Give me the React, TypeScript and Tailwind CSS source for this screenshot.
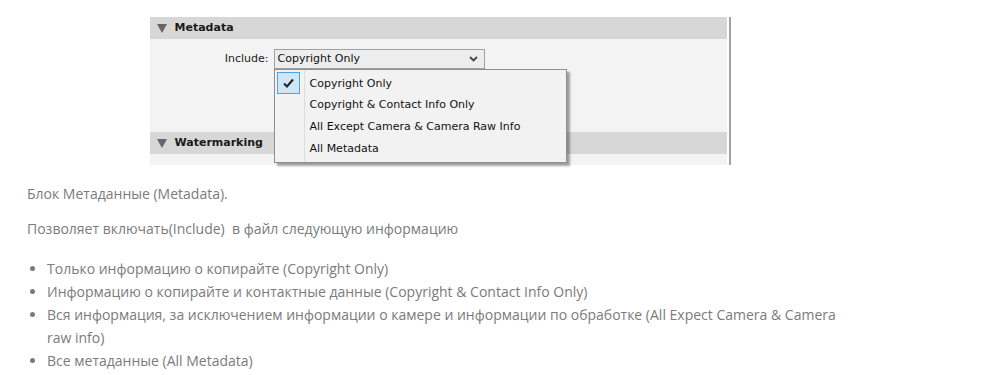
import { Fragment } from 'react';

const menuItems = [
  'Copyright Only',
  'Copyright & Contact Info Only',
  'All Except Camera & Camera Raw Info',
  'All Metadata',
];

const bullets = [
  'Только информацию о копирайте (Copyright Only)',
  'Информацию о копирайте и контактные данные (Copyright & Contact Info Only)',
  'Вся информация, за исключением информации о камере и информации по обработке (All Expect Camera & Camera raw info)',
  'Все метаданные (All Metadata)',
];

function Triangle() {
  return (
    <svg width="10" height="9" viewBox="0 0 10 9" className="shrink-0">
      <path d="M0 0 H10 L5 9 Z" fill="#666" />
    </svg>
  );
}

function SectionHeader({ title }: { title: string }) {
  return (
    <div className="h-[22px] bg-[#d7d7d7] flex items-center gap-[8px] pl-[7px] text-[11px] font-bold text-[#1a1a1a]">
      <Triangle />
      <span>{title}</span>
    </div>
  );
}

function Panel() {
  return (
    <div className="mx-auto w-[581px] h-[148px] flex" style={{ fontFamily: '"DejaVu Sans", Tahoma, sans-serif' }}>
      <div className="relative w-[577px] h-full flex flex-col bg-[#f3f3f3]">
        <SectionHeader title="Metadata" />
        <div className="h-[93px] pt-[10px] flex items-start">
          <span className="w-[119px] text-right text-[11px] text-[#222] leading-[20px]">Include:</span>
          <div className="ml-[5px] w-[211px] h-[20px] border border-[#a0a0a0] bg-[#ededed] flex items-center justify-between pl-[3px] pr-[6px] text-[11px] text-[#111]">
            <span>Copyright Only</span>
            <svg width="9" height="6" viewBox="0 0 9 6">
              <path d="M1 1 L4.5 4.5 L8 1" stroke="#444" strokeWidth="1.8" fill="none" />
            </svg>
          </div>
        </div>
        <SectionHeader title="Watermarking" />
        <div className="flex-1" />

        <div className="absolute left-[124px] top-[52px] w-[293px] h-[94px] border border-[#8e8e8e] bg-[#f2f2f2] shadow-[3px_3px_2px_rgba(0,0,0,0.35)] flex">
          <div className="w-[30px] border-r border-[#dcdcdc] pt-[2px] pl-[2px] flex flex-col">
            <div className="w-[23px] h-[22px] bg-[#cfe6f7] border border-[#4ea3e0] flex items-center justify-center">
              <svg width="11" height="10" viewBox="0 0 11 10">
                <path d="M1 5.5 L4 8.5 L10 1.5" stroke="#222" strokeWidth="2" fill="none" />
              </svg>
            </div>
          </div>
          <div className="flex-1 pt-[3px] pl-[5px] flex flex-col text-[11px] text-[#111]">
            {menuItems.map((item) => (
              <Fragment key={item}>
                <div className="h-[21.7px] flex items-center">{item}</div>
              </Fragment>
            ))}
          </div>
        </div>
      </div>
      <div className="w-[2px]" />
      <div className="w-[2px] bg-[#a3a3a3]" />
    </div>
  );
}

export default function App() {
  return (
    <div className="w-full h-[375px] bg-white pt-[17px] overflow-hidden">
      <div className="ml-[27px] w-[826px] text-[14px] text-[#7b7b7b]" style={{ fontFamily: '"Open Sans", "Noto Sans", sans-serif' }}>
        <Panel />
        <p className="mt-[17px] leading-[23px]">Блок Метаданные (Metadata).</p>
        <p className="mt-[12px] leading-[23px]">Позволяет включать(Include)&nbsp; в файл следующую информацию</p>
        <ul className="mt-[17px] pl-[20px] list-disc leading-[23px]">
          {bullets.map((b) => (
            <li key={b} className="marker:text-[#7b7b7b]">{b}</li>
          ))}
        </ul>
      </div>
    </div>
  );
}
